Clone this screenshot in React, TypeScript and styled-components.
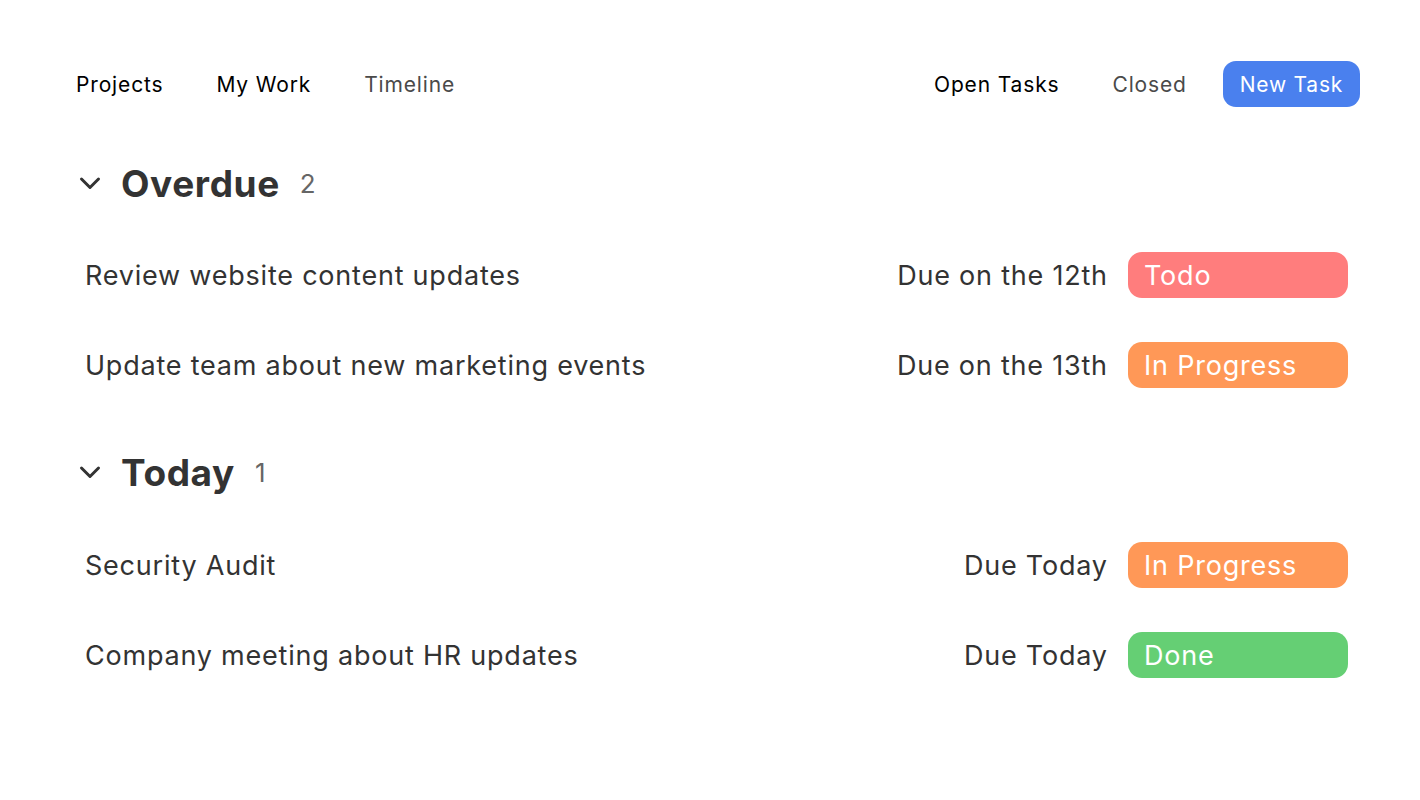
import React from "react";
import styled, { createGlobalStyle } from "styled-components";

const Global = createGlobalStyle`
  html, body { margin: 0; padding: 0; background: #fff; }
  body {
    font-family: Inter, "Noto Sans", sans-serif;
    -webkit-font-smoothing: antialiased;
  }
  * { box-sizing: border-box; }
`;

const Page = styled.div`
  width: 1420px;
  height: 800px;
  padding: 61px 60px 0 59px;
  background: #fff;
`;

const TopBar = styled.div`
  display: flex;
  justify-content: space-between;
  align-items: center;
  height: 46px;
`;

const NavGroup = styled.nav`
  display: flex;
  align-items: center;
  gap: 19px;
`;

const NavItem = styled.button<{ $muted?: boolean }>`
  font-family: inherit;
  border: none;
  background: transparent;
  padding: 0 17px;
  height: 46px;
  font-size: 21px;
  font-weight: 400;
  letter-spacing: 0.85px;
  color: ${(p) => (p.$muted ? "#4a4a4a" : "#000")};
  cursor: pointer;
`;

const PrimaryButton = styled.button`
  font-family: inherit;
  border: none;
  background: #4a80ee;
  color: #fff;
  border-radius: 13px;
  height: 46px;
  padding: 0 17px;
  font-size: 21px;
  font-weight: 400;
  letter-spacing: 0.75px;
  cursor: pointer;
`;

const Section = styled.section`
  display: flex;
  flex-direction: column;
`;

const SectionHeader = styled.div<{ $top: number }>`
  display: flex;
  align-items: center;
  height: 60px;
  margin-top: ${(p) => p.$top}px;
  padding-left: 20px;
`;

const Chevron = styled.span`
  display: flex;
  width: 22px;
  margin-right: 20px;
  color: #333;
`;

const Title = styled.h2`
  margin: 0;
  font-size: 37px;
  font-weight: 700;
  letter-spacing: 0.6px;
  color: #333;
`;

const Count = styled.span`
  margin-left: 20px;
  font-size: 26px;
  font-weight: 400;
  color: #666;
`;

const TaskList = styled.div<{ $top: number }>`
  display: flex;
  flex-direction: column;
  margin-top: ${(p) => p.$top}px;
  gap: 44px;
`;

const TaskRow = styled.div`
  display: flex;
  align-items: center;
  justify-content: space-between;
  height: 46px;
  padding-left: 26px;
  padding-right: 12px;
`;

const TaskName = styled.span`
  font-size: 27px;
  font-weight: 400;
  letter-spacing: 0.78px;
  color: #333;
`;

const TaskMeta = styled.div`
  display: flex;
  align-items: center;
  gap: 21px;
`;

const DueText = styled.span`
  font-size: 27px;
  font-weight: 400;
  letter-spacing: 0.78px;
  margin-right: -0.78px;
  color: #333;
`;

const statusColors: Record<string, string> = {
  Todo: "#ff7d7d",
  "In Progress": "#ff9857",
  Done: "#65cf74",
};

const Badge = styled.span<{ $status: string }>`
  display: flex;
  align-items: center;
  width: 220px;
  height: 46px;
  padding-left: 16px;
  border-radius: 14px;
  background: ${(p) => statusColors[p.$status]};
  color: #fff;
  font-size: 27px;
  font-weight: 400;
  letter-spacing: 0.78px;
`;

const ChevronIcon = () => (
  <svg width="22" height="14" viewBox="0 0 22 14" fill="none">
    <path d="M2.5 3l8.5 8.5L19.5 3" stroke="#333" strokeWidth="3" strokeLinecap="round" strokeLinejoin="round" />
  </svg>
);

type Task = { name: string; due: string; status: string };

const groups: { title: string; count: number; tasks: Task[]; top: number; listTop: number }[] = [
  {
    title: "Overdue",
    count: 2,
    top: 46,
    listTop: 39,
    tasks: [
      { name: "Review website content updates", due: "Due on the 12th", status: "Todo" },
      { name: "Update team about new marketing events", due: "Due on the 13th", status: "In Progress" },
    ],
  },
  {
    title: "Today",
    count: 1,
    top: 54,
    listTop: 40,
    tasks: [
      { name: "Security Audit", due: "Due Today", status: "In Progress" },
      { name: "Company meeting about HR updates", due: "Due Today", status: "Done" },
    ],
  },
];

export default function App() {
  return (
    <>
      <Global />
      <Page>
        <TopBar>
          <NavGroup>
            <NavItem>Projects</NavItem>
            <NavItem>My Work</NavItem>
            <NavItem $muted>Timeline</NavItem>
          </NavGroup>
          <NavGroup>
            <NavItem>Open Tasks</NavItem>
            <NavItem $muted>Closed</NavItem>
            <PrimaryButton>New Task</PrimaryButton>
          </NavGroup>
        </TopBar>
        {groups.map((g) => (
          <Section key={g.title}>
            <SectionHeader $top={g.top}>
              <Chevron>
                <ChevronIcon />
              </Chevron>
              <Title>{g.title}</Title>
              <Count>{g.count}</Count>
            </SectionHeader>
            <TaskList $top={g.listTop}>
              {g.tasks.map((t) => (
                <TaskRow key={t.name}>
                  <TaskName>{t.name}</TaskName>
                  <TaskMeta>
                    <DueText>{t.due}</DueText>
                    <Badge $status={t.status}>{t.status}</Badge>
                  </TaskMeta>
                </TaskRow>
              ))}
            </TaskList>
          </Section>
        ))}
      </Page>
    </>
  );
}
